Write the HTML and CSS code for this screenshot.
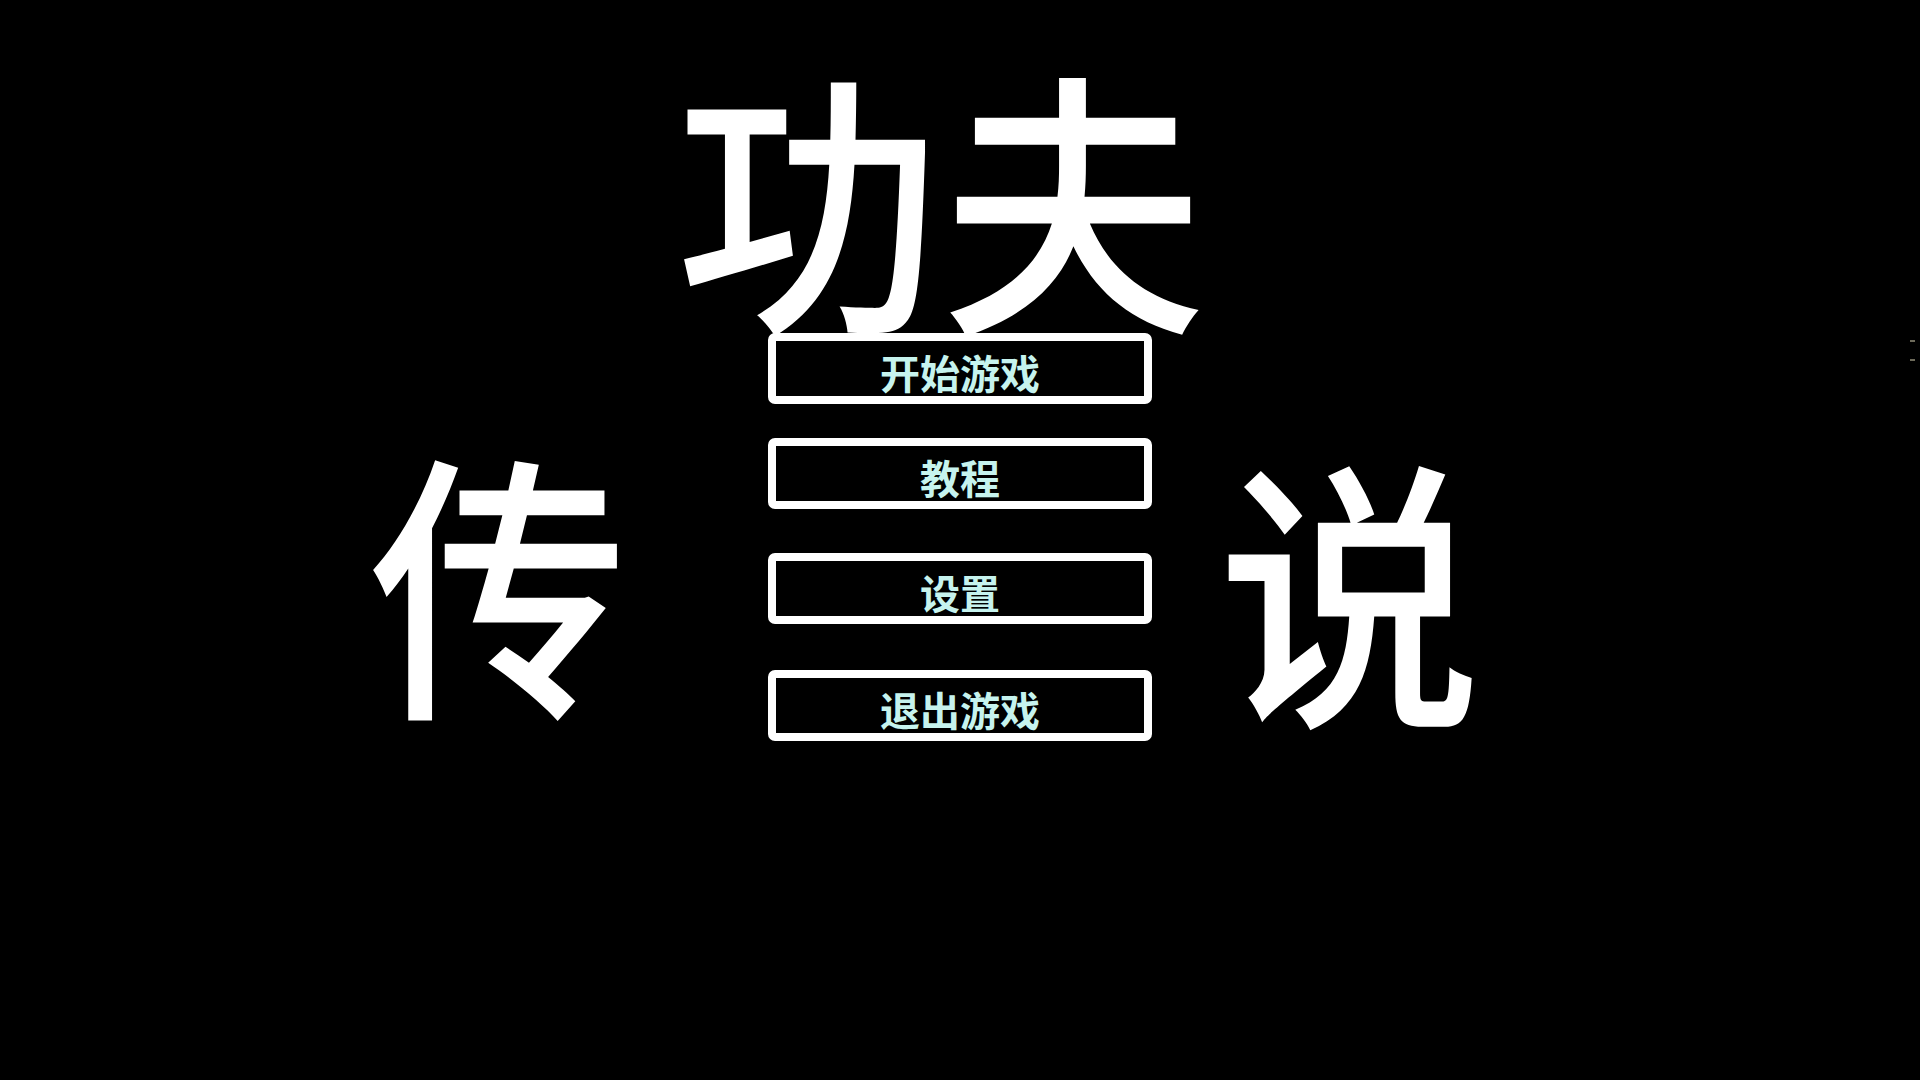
FILE: index.html
```html
<!DOCTYPE html>
<html lang="zh-CN">
<head>
<meta charset="utf-8">
<title>功夫传说</title>
<link rel="stylesheet" href="styles.css">
</head>
<body>
<div class="screen">
  <h1 class="title">功夫</h1>
  <div class="stage">
    <div class="side side-left">传</div>
    <nav class="menu">
      <button class="menu-btn">开始游戏</button>
      <button class="menu-btn">教程</button>
      <button class="menu-btn">设置</button>
      <button class="menu-btn">退出游戏</button>
    </nav>
    <div class="side side-right">说</div>
  </div>
  <div class="edge-marks"><span></span><span></span></div>
</div>
</body>
</html>
```

FILE: styles.css
```css
html, body {
  margin: 0;
  padding: 0;
  background: #000;
}
.screen {
  position: relative;
  width: 1920px;
  height: 1080px;
  overflow: hidden;
  background: #000;
  font-family: "Noto Sans CJK SC", "Noto Sans", sans-serif;
}
.title {
  margin: 0;
  padding: 54px 40px 0 0;
  font-size: 275px;
  line-height: 275px;
  height: 279px;
  font-weight: 500;
  color: #fff;
  text-align: center;
  transform: scale(0.965, 1.01);
}
.stage {
  display: flex;
  align-items: flex-start;
  padding-left: 361px;
}
.side {
  width: 275px;
  font-size: 275px;
  line-height: 275px;
  font-weight: 500;
  color: #fff;
  text-align: center;
}
.side-left {
  margin-top: 104px;
  margin-right: 132px;
  transform: scale(0.94, 1.025);
}
.side-right {
  margin-top: 112px;
  margin-left: 60px;
  transform: scale(0.957, 1.037);
}
.menu {
  display: flex;
  flex-direction: column;
  width: 384px;
}
.menu-btn {
  box-sizing: border-box;
  width: 384px;
  height: 71px;
  margin: 0;
  padding: 6px 0 0;
  border: 8px solid #fff;
  border-radius: 7px;
  background: #000;
  color: #c6f3ee;
  font-family: "Noto Sans CJK SC", "Noto Sans", sans-serif;
  font-size: 40px;
  font-weight: 700;
  line-height: 40px;
  text-align: center;
}
.menu-btn:nth-child(2) { margin-top: 34px; }
.menu-btn:nth-child(3) { margin-top: 44px; }
.menu-btn:nth-child(4) { margin-top: 46px; }
.edge-marks {
  position: absolute;
  left: 1910px;
  top: 340px;
  display: flex;
  flex-direction: column;
  gap: 17px;
}
.edge-marks span {
  display: block;
  width: 5px;
  height: 2px;
  background: #6d6a5a;
}
```
